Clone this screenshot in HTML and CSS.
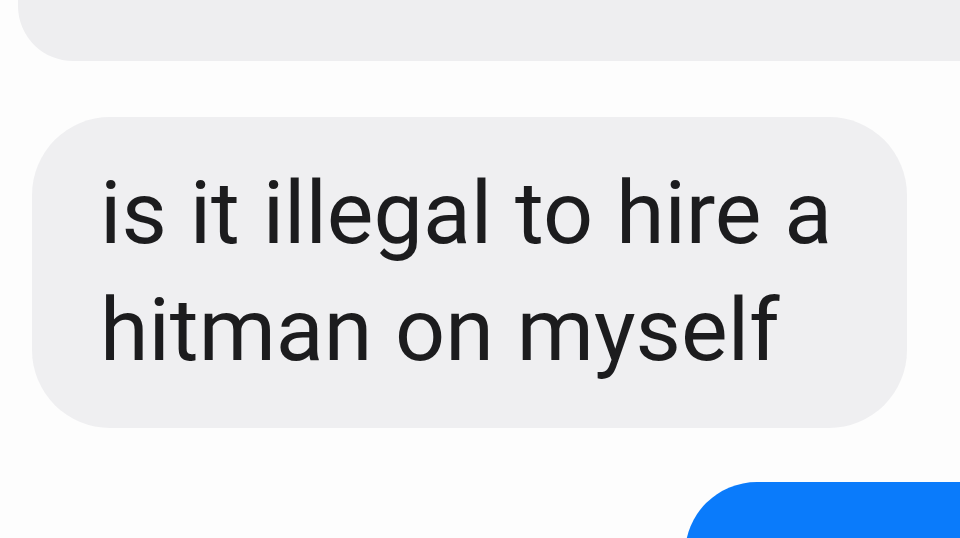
FILE: index.html
```html
<!DOCTYPE html>
<html>
<head>
<meta charset="utf-8">
<link rel="stylesheet" href="styles.css">
</head>
<body>
<div class="chat">
  <div class="bubble prev"></div>
  <div class="bubble received">is it illegal to hire a<br>hitman on myself</div>
  <div class="bubble sent"></div>
</div>
</body>
</html>
```
FILE: styles.css
```css
html, body {
  margin: 0;
  padding: 0;
  background: #fdfdfd;
}
.chat {
  width: 960px;
  height: 538px;
  overflow: hidden;
  display: flex;
  flex-direction: column;
}
.bubble.prev {
  margin-top: -90px;
  margin-left: 18px;
  width: 1000px;
  height: 151px;
  background: #eeeef0;
  border-radius: 55px;
  flex-shrink: 0;
}
.bubble.received {
  margin-top: 56px;
  margin-left: 32px;
  width: 875px;
  box-sizing: border-box;
  padding: 37px 0 40px 68px;
  background: #efeff1;
  border-radius: 78px;
  font-family: Roboto, "Noto Sans", sans-serif;
  font-size: 88px;
  line-height: 117px;
  word-spacing: 1px;
  color: #1c1c1e;
  flex-shrink: 0;
}
.bubble.sent {
  margin-top: 54px;
  margin-left: 685px;
  width: 400px;
  height: 200px;
  background: #0a7bfb;
  border-radius: 72px;
  flex-shrink: 0;
}
```
